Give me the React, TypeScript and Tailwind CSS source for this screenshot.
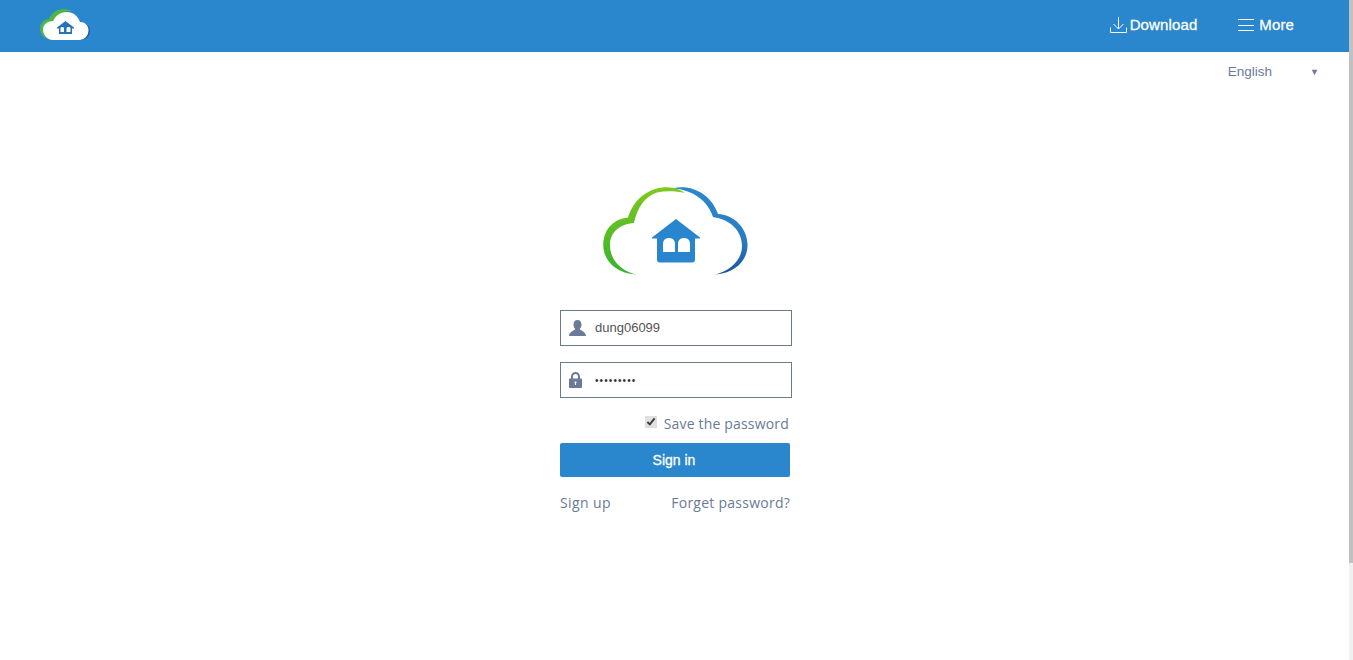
import React from 'react';

const CloudMark = () => (
  <svg width="146" height="90" viewBox="0 0 146 90" fill="none">
    <defs>
      <linearGradient id="bigGreen" x1="0" y1="0" x2="0" y2="1">
        <stop offset="0" stopColor="#80c91c" />
        <stop offset="1" stopColor="#35b22e" />
      </linearGradient>
      <linearGradient id="bigBlue" x1="0" y1="0" x2="0" y2="1">
        <stop offset="0" stopColor="#2a87cc" />
        <stop offset="0.6" stopColor="#2a7cc2" />
        <stop offset="1" stopColor="#1c55a0" />
      </linearGradient>
    </defs>
    <path d="M33 88.500C13 87 0.300 75 0.300 59C0.300 44 10 33 25 31.500C31 12 47 1.300 64 1.300C71 1.300 77 3.500 82 7C73 5 63 4.500 54 6.500C42 10 34 22 31 37C17 38 7 46 7 59C7 74 18 85 33 88.500Z" fill="url(#bigGreen)" />
    <path d="M70 2.300C90 -2 108 9 115 28C132 29 144.500 43 144.500 59C144.500 75 132 87 112 88.500C127 85 139 74 139 60C139 46 129 34 110 31C105 15 90 4 70 2.300Z" fill="url(#bigBlue)" />
    <path d="M73 33L97 51.500V52.500H92V74C92 75.500 91 76.500 89.500 76.500H56.500C55 76.500 54 75.500 54 74V52.500H49V51.500Z" fill="#2a85cf" />
    <path d="M60 66V58C60 54 62.500 52 66 52C69.500 52 72 54 72 58V66Z" fill="#fff" />
    <path d="M75 66V58C75 54 77.500 52 81 52C84.500 52 87 54 87 58V66Z" fill="#fff" />
  </svg>
);

const SmallCloud = () => (
  <svg width="50" height="31" viewBox="0 0 50 31" fill="none" className="mb-[3px]">
    <path d="M12 31C4 30 0 25 0 20C0 14 4 10 9 10C11 4 17 0 24 0C28 0 30 1 32 2C25 2 17 5 14 12C8 12 3 15 3 20C3 25 7 29 12 31Z" fill="#4cb748" />
    <path d="M12 31C6 30 3 25 3 20.500C3 15 8 12 13 12C16 6 21 3 27 3C33 3 38 7 40 13C46 13 49 17 49 21C49 26 46 30 40 31Z" fill="#fff" />
    <path d="M40 31C46 30 48.500 26 48.500 21C48.500 17 46 14 42 13.500C46 13.500 50 17 50 22C50 27 46 31 40 31Z" fill="#1f5da8" />
    <path d="M25.500 12L34 18.500V19.500H32V25H19V19.500H17V18.500Z" fill="#2473bd" />
    <path d="M20.500 23V19C20.500 17.500 24 17.500 24 19V23Z" fill="#fff" />
    <path d="M26.500 23V19C26.500 17.500 30.500 17.500 30.500 19V23Z" fill="#fff" />
  </svg>
);

const DownloadIcon = () => (
  <svg width="17" height="16" viewBox="0 0 17 16" fill="none" stroke="#fff" strokeWidth="1">
    <path d="M8.500 0V11.500M3.500 7L8.500 12L13.500 7" />
    <path d="M0.500 10.500V15.500H16.500V10.500" />
  </svg>
);

const MenuIcon = () => (
  <svg width="16" height="12" viewBox="0 0 16 12" stroke="#fff" strokeWidth="1">
    <path d="M0 0.500H16M0 6.500H16M0 11.500H16" />
  </svg>
);

const UserIcon = () => (
  <svg width="17" height="16" viewBox="0 0 17 16" fill="#6b7a99">
    <path d="M8.500 0C11 0 12.500 2 12.500 4.500C12.500 6.500 11.500 8 10.700 9C11 10.500 16.500 11 17 16H0C0.500 11 6 10.500 6.300 9C5.500 8 4.500 6.500 4.500 4.500C4.500 2 6 0 8.500 0Z" />
  </svg>
);

const LockIcon = () => (
  <svg width="13" height="16" viewBox="0 0 13 16" fill="#6b7a99">
    <path fillRule="evenodd" d="M2 6.500V4.500C2 2 4 0 6.500 0C9 0 11 2 11 4.500V6.500H12C12.600 6.500 13 6.900 13 7.500V15C13 15.600 12.600 16 12 16H1C0.400 16 0 15.600 0 15V7.500C0 6.900 0.400 6.500 1 6.500ZM4 6.500H9V4.500C9 3 8 2 6.500 2C5 2 4 3 4 4.500ZM6.500 9.500C5.900 9.500 5.500 9.900 5.500 10.500C5.500 11 5.800 11.300 6 11.400V13H7V11.400C7.200 11.300 7.500 11 7.500 10.500C7.500 9.900 7.100 9.500 6.500 9.500Z" />
  </svg>
);

export default function App() {
  return (
    <div className="flex h-[660px] overflow-hidden bg-white font-['Liberation_Sans',sans-serif]">
      <div className="flex-1 flex flex-col">
        <header className="h-[52px] bg-[#2a86cd] flex items-center justify-between pl-[40px] text-white">
          <SmallCloud />
          <nav className="flex items-center pr-[55px] mb-[2px] text-[15px] tracking-[0.12px] [-webkit-text-stroke:0.3px_#fff]">
            <a className="flex items-center gap-[3px] mr-[41px]">
              <DownloadIcon />
              Download
            </a>
            <a className="flex items-center gap-[5px]">
              <MenuIcon />
              More
            </a>
          </nav>
        </header>

        <div className="h-[40px] pt-[1px] flex items-center justify-end pr-[30px] text-[13.5px] text-[#6b7a99]">
          <span>English</span>
          <span className="ml-[38px] text-[9px]">▼</span>
        </div>

        <main className="flex flex-col items-center pt-[94px] pl-[3px]">
          <CloudMark />

          <div className="w-[232px] mt-[34px] font-['Open_Sans',sans-serif]">
            <div className="h-[36px] border border-[#6b7a8c] flex items-center pl-[8px]">
              <UserIcon />
              <span className="ml-[9px] text-[13px] text-[#555] font-['Liberation_Sans',sans-serif]">dung06099</span>
            </div>
            <div className="h-[36px] mt-[16px] border border-[#6b7a8c] flex items-center pl-[8px]">
              <LockIcon />
              <span className="ml-[13px] text-[10px] text-[#333] font-['Liberation_Sans',sans-serif] tracking-[1.1px]">•••••••••</span>
            </div>

            <label className="h-[20px] mt-[15px] flex items-center justify-end pr-[3px] text-[14px] tracking-[0.18px] text-[#6b7a99]">
              <input type="checkbox" defaultChecked className="w-[12px] h-[12px] mr-[7px] mb-[2px] accent-[#e0e0e0]" />
              Save the password
            </label>

            <button className="block w-[230px] h-[34px] mt-[10px] pr-[2px] bg-[#2a86cd] rounded-[2px] text-white text-[14px] font-['Liberation_Sans',sans-serif] [-webkit-text-stroke:0.3px_#fff]">
              Sign in
            </button>

            <div className="w-[230px] mt-[15px] flex justify-between text-[14px] tracking-[0.25px] text-[#6b7a99]">
              <a className="tracking-[0.4px]">Sign up</a>
              <a>Forget password?</a>
            </div>
          </div>
        </main>
      </div>

      <div className="w-[4px] bg-[#f1f1f1]">
        <div className="h-[563px] bg-[#c1c1c1]" />
      </div>
    </div>
  );
}
